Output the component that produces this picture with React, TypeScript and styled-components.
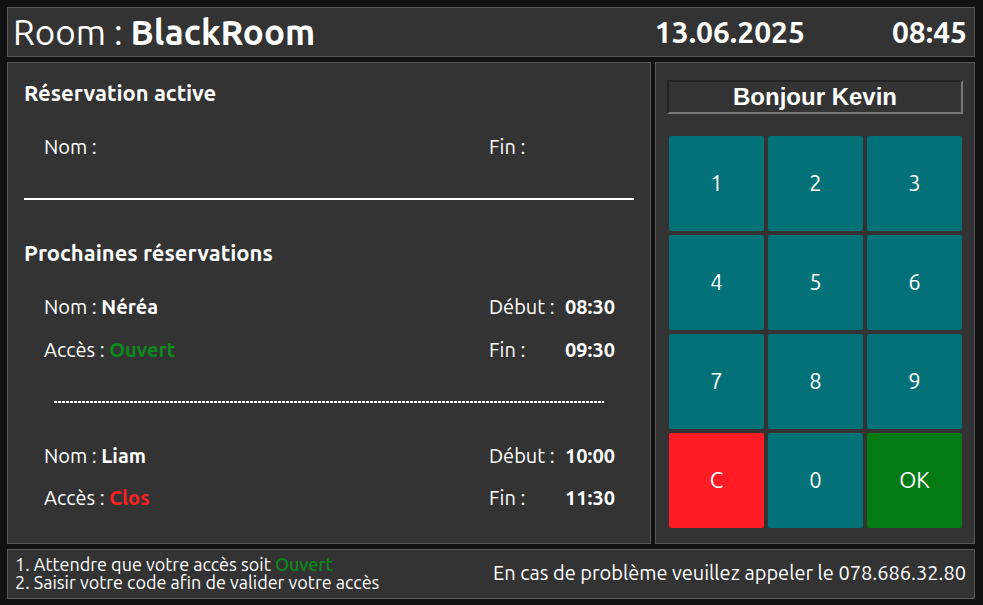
import React from 'react'
import styled, { createGlobalStyle } from 'styled-components'

const GlobalStyle = createGlobalStyle`
  html, body {
    margin: 0;
    padding: 0;
    background: #111111;
  }
  body {
    font-family: Ubuntu, "Open Sans", sans-serif;
    color: #ffffff;
  }
`

const Screen = styled.div`
  width: 983px;
  height: 605px;
  box-sizing: border-box;
  padding: 7px 8px 8px 7px;
  display: grid;
  grid-template-rows: 50px 482px 50px;
  row-gap: 5px;
  background: #111111;
`

const Box = styled.div`
  box-sizing: border-box;
  background: #333333;
  border: 1px solid #595959;
`

const TopBar = styled(Box)`
  display: flex;
  align-items: center;
  padding: 0 7px 0 5px;
`

const RoomTitle = styled.div`
  flex: 1;
  font-size: 35px;
  line-height: 1;
  b {
    font-weight: 700;
  }
`

const DateText = styled.div`
  font-size: 30px;
  font-weight: 700;
  margin-right: 87px;
`

const TimeText = styled.div`
  font-size: 30px;
  font-weight: 700;
`

const Main = styled.div`
  display: grid;
  grid-template-columns: 644px 320px;
  column-gap: 4px;
`

const LeftPanel = styled(Box)`
  padding: 16px 16px 0 16px;
  display: flex;
  flex-direction: column;
`

const SectionTitle = styled.div<{ $top: number }>`
  font-size: 22px;
  font-weight: 700;
  line-height: 28px;
  margin-top: ${p => p.$top}px;
`

const InfoRow = styled.div<{ $top: number }>`
  display: grid;
  grid-template-columns: 445px 76px auto;
  padding-left: 20px;
  font-size: 20px;
  line-height: 24px;
  margin-top: ${p => p.$top}px;
  b {
    font-weight: 700;
  }
`

const Status = styled.b<{ $open: boolean }>`
  color: ${p => (p.$open ? '#0b8a1c' : '#ff2222')};
`

const SolidRule = styled.div<{ $top: number }>`
  height: 2px;
  background: #ffffff;
  margin-top: ${p => p.$top}px;
`

const DashedRule = styled.div<{ $top: number }>`
  height: 2px;
  margin: ${p => p.$top}px 30px 0 30px;
  background: repeating-linear-gradient(to right, #ffffff 0 3px, transparent 3px 4px);
`

const RightPanel = styled(Box)`
  padding: 17px 11px 0 11px;
  display: flex;
  flex-direction: column;
`

const Greeting = styled.div`
  height: 34px;
  box-sizing: border-box;
  border: 2px solid;
  border-color: #222222 #777777 #777777 #222222;
  display: flex;
  align-items: center;
  justify-content: center;
  font-family: "Liberation Sans", Arial, sans-serif;
  font-weight: 700;
  font-size: 24px;
`

const Keypad = styled.div`
  margin: 22px 0 0 2px;
  display: grid;
  grid-template-columns: repeat(3, 95px);
  grid-auto-rows: 95px;
  gap: 4px;
`

const Key = styled.button<{ $bg: string }>`
  border: none;
  border-radius: 2px;
  background: ${p => p.$bg};
  color: #ffffff;
  font-family: Ubuntu, "Open Sans", sans-serif;
  font-size: 22px;
  padding: 0 0 2px;
  cursor: pointer;
`

const Footer = styled(Box)`
  display: flex;
  align-items: center;
  justify-content: space-between;
  padding: 0 8px 3px 7px;
`

const Steps = styled.div`
  font-size: 18px;
  line-height: 18px;
  b {
    font-weight: 500;
    color: #0b8a1c;
  }
`

const Help = styled.div`
  font-size: 20px;
`

const keys = [
  { label: '1', bg: '#027278' },
  { label: '2', bg: '#027278' },
  { label: '3', bg: '#027278' },
  { label: '4', bg: '#027278' },
  { label: '5', bg: '#027278' },
  { label: '6', bg: '#027278' },
  { label: '7', bg: '#027278' },
  { label: '8', bg: '#027278' },
  { label: '9', bg: '#027278' },
  { label: 'C', bg: '#ff1c24' },
  { label: '0', bg: '#027278' },
  { label: 'OK', bg: '#037b12' },
]

export default function App() {
  return (
    <>
      <GlobalStyle />
      <Screen>
        <TopBar>
          <RoomTitle>
            Room : <b>BlackRoom</b>
          </RoomTitle>
          <DateText>13.06.2025</DateText>
          <TimeText>08:45</TimeText>
        </TopBar>

        <Main>
          <LeftPanel>
            <SectionTitle $top={0}>Réservation active</SectionTitle>
            <InfoRow $top={28}>
              <span>Nom :</span>
              <span>Fin :</span>
              <span />
            </InfoRow>
            <SolidRule $top={39} />

            <SectionTitle $top={39}>Prochaines réservations</SectionTitle>
            <InfoRow $top={28}>
              <span>
                Nom : <b>Néréa</b>
              </span>
              <span>Début :</span>
              <b>08:30</b>
            </InfoRow>
            <InfoRow $top={19}>
              <span>
                Accès : <Status $open>Ouvert</Status>
              </span>
              <span>Fin :</span>
              <b>09:30</b>
            </InfoRow>
            <DashedRule $top={39} />
            <InfoRow $top={41}>
              <span>
                Nom : <b>Liam</b>
              </span>
              <span>Début :</span>
              <b>10:00</b>
            </InfoRow>
            <InfoRow $top={18}>
              <span>
                Accès : <Status $open={false}>Clos</Status>
              </span>
              <span>Fin :</span>
              <b>11:30</b>
            </InfoRow>
          </LeftPanel>

          <RightPanel>
            <Greeting>Bonjour Kevin</Greeting>
            <Keypad>
              {keys.map(k => (
                <Key key={k.label} type="button" $bg={k.bg}>
                  {k.label}
                </Key>
              ))}
            </Keypad>
          </RightPanel>
        </Main>

        <Footer>
          <Steps>
            1. Attendre que votre accès soit <b>Ouvert</b>
            <br />
            2. Saisir votre code afin de valider votre accès
          </Steps>
          <Help>En cas de problème veuillez appeler le 078.686.32.80</Help>
        </Footer>
      </Screen>
    </>
  )
}
